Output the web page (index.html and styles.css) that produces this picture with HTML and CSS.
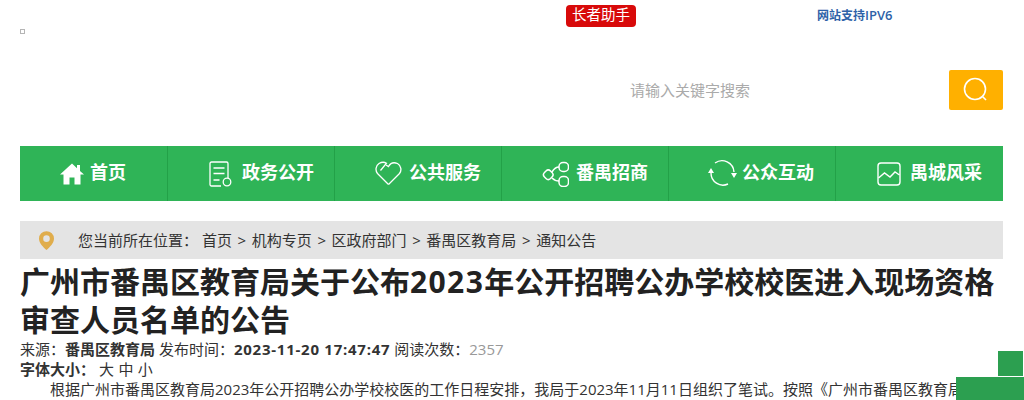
FILE: index.html
```html
<!DOCTYPE html>
<html lang="zh-CN">
<head>
    <meta charset="UTF-8">
    <title>广州市番禺区教育局关于公布2023年公开招聘公办学校校医进入现场资格审查人员名单的公告</title>
    <link rel="stylesheet" href="styles.css">
</head>
<body>
    <header class="top">
        <div class="top_links">
            <a class="elder_btn">长者助手</a>
            <span class="ipv6">网站支持<span class="ipv6_en">IPV6</span></span>
        </div>
        <div class="logo_row">
            <span class="broken_logo"></span>
            <div class="search">
                <span class="search_text">请输入关键字搜索</span>
                <button class="search_btn">
                    <svg width="26" height="26" viewBox="0 0 26 26" fill="none" stroke="#fff" stroke-width="1.6"><circle cx="12" cy="12" r="10.5"/><path d="M19.500 19.500l3.500 3.500"/></svg>
                </button>
            </div>
        </div>
    </header>

    <nav class="nav">
        <a class="nav_item">
            <svg class="icon_home" width="24" height="22" viewBox="0 0 24 22" fill="#fff"><path d="M12 0.500L0 11.500h3.500v10h6v-7h5v7h6v-10H24L20 8V2h-3v3.200z"/></svg>
            <span class="nav_text">首页</span>
        </a>
        <a class="nav_item">
            <svg class="icon_doc" width="23" height="26" viewBox="0 0 23 26" fill="none" stroke="#fff" stroke-width="1.300"><path d="M12 25H2.500A1.500 1.500 0 0 1 1 23.500V2.500A1.500 1.500 0 0 1 2.500 1h15A1.500 1.500 0 0 1 19 2.500V17"/><path d="M4.500 7h11M4.500 12.500h11M4.500 19h6"/><circle cx="18" cy="21" r="3.800"/></svg>
            <span class="nav_text">政务公开</span>
        </a>
        <a class="nav_item">
            <svg class="icon_heart" width="27" height="25" viewBox="0 0 27 25" fill="none" stroke="#fff" stroke-width="1.300"><path d="M13.500 23.500L2.500 12.500C0 9.500 .8 4.500 4 2.500 6.500 1 9.500 1 11.500 2.200L5.500 9.500"/><path d="M13.500 23.500L24.500 12.500C27 9.500 26 4.500 22.500 2.500 19 1 15.500 2 13.500 5.500L11 4"/></svg>
            <span class="nav_text">公共服务</span>
        </a>
        <a class="nav_item">
            <svg class="icon_share" width="27" height="26" viewBox="0 0 27 26" fill="none" stroke="#fff" stroke-width="1.500"><rect x="2" y="9.500" width="8.500" height="8.500" rx="3.200" transform="rotate(45 6.250 13.750)"/><rect x="17" y="1.500" width="9.500" height="9" rx="4"/><rect x="17" y="15.500" width="9.500" height="10" rx="4"/><path d="M10 11Q13 6 17 6M10 17Q13 20 17 20"/></svg>
            <span class="nav_text">番禺招商</span>
        </a>
        <a class="nav_item">
            <svg class="icon_cycle" width="30" height="29" viewBox="0 0 30 29" fill="none" stroke="#fff" stroke-width="1.400"><path d="M8 4A12 12 0 0 1 27 13"/><path d="M4 14A12 12 0 0 0 21 25"/><path d="M24 14h6l-3 5zM1 14h6l-3-5z" fill="#fff" stroke="none"/></svg>
            <span class="nav_text">公众互动</span>
        </a>
        <a class="nav_item">
            <svg class="icon_chart" width="24" height="24" viewBox="0 0 24 24" fill="none" stroke="#fff" stroke-width="1.400"><rect x="1" y="1" width="22" height="22" rx="3"/><path d="M1.500 16l6-5 5.500 4 5-5 4.500 3"/></svg>
            <span class="nav_text">禺城风采</span>
        </a>
    </nav>

    <div class="crumb">
        <svg class="crumb_pin" width="15" height="19" viewBox="0 0 16 20"><path fill-rule="evenodd" fill="#e0ad4c" d="M8 0a8 8 0 0 1 8 8c0 4.500-4.500 9-8 12C4.500 17 0 12.500 0 8a8 8 0 0 1 8-8zm0 4.500a3.500 3.500 0 1 0 0 7 3.500 3.500 0 0 0 0-7z"/></svg>
        <span class="crumb_label">您当前所在位置：</span>
        <span class="crumb_path">首页<i class="sep">&gt;</i>机构专页<i class="sep">&gt;</i>区政府部门<i class="sep">&gt;</i>番禺区教育局<i class="sep">&gt;</i>通知公告</span>
    </div>

    <main class="article">
        <h1 class="title">广州市番禺区教育局关于公布<span class="title_num">2023</span>年公开招聘公办学校校医进入现场资格<br>审查人员名单的公告</h1>
        <div class="meta">来源：<b>番禺区教育局</b> 发布时间：<b class="date">2023-11-20 17:47:47</b> 阅读次数：<span class="count">2357</span></div>
        <div class="meta"><b>字体大小：</b><span class="sizes">大 中 小</span></div>
        <p class="body_text">根据广州市番禺区教育局2023年公开招聘公办学校校医的工作日程安排，我局于2023年11月11日组织了笔试。按照《广州市番禺区教育局2023</p>
    </main>

    <div class="float_top"></div>
    <div class="float_bar"></div>
</body>
</html>
```

FILE: styles.css
```css
html {
    overflow: hidden;
}
body {
    margin: 0;
    height: 400px;
    overflow: hidden;
    background: #fff;
    color: #333;
    font-family: "Open Sans", "Noto Sans CJK SC", sans-serif;
    font-size: 15px;
}
.top {
    height: 146px;
    padding: 0 21px 0 20px;
}
.top_links {
    display: flex;
    align-items: center;
    height: 22px;
    padding-top: 5px;
    padding-left: 546px;
}
.elder_btn {
    width: 70px;
    height: 22px;
    line-height: 20px;
    text-align: center;
    font-size: 14.5px;
    color: #fff;
    background: #d80a0a;
    border-radius: 4px;
}
.ipv6 {
    margin-left: 181px;
    padding-bottom: 2px;
    font-size: 12px;
    font-weight: 600;
    color: #2e62a8;
}
.ipv6_en {
    font-size: 13px;
}
.logo_row {
    display: flex;
    justify-content: space-between;
    align-items: flex-start;
}
.broken_logo {
    display: block;
    width: 3px;
    height: 3px;
    margin-top: 2px;
    border: 1px solid #b5b5b5;
}
.search {
    display: flex;
    align-items: center;
    margin-top: 43px;
}
.search_text {
    width: 319px;
    padding-bottom: 2px;
    font-size: 15px;
    color: #aaa;
}
.search_btn {
    display: flex;
    align-items: center;
    justify-content: center;
    width: 54px;
    height: 40px;
    padding: 0;
    border: 0;
    border-radius: 2px;
    background: #ffb000;
}
.nav {
    display: grid;
    grid-template-columns: 148px repeat(5, 167px);
    width: 983px;
    height: 55px;
    margin-left: 20px;
    background: #2fb457;
}
.nav_item {
    display: flex;
    align-items: center;
    padding-left: 40px;
    border-right: 1px solid #23a148;
    font-size: 18px;
    font-weight: 700;
    color: #fff;
}
.nav_item:last-child {
    border-right: 0;
}
.nav_text {
    margin-bottom: 5px;
}
.icon_home {
    margin-right: 6px;
}
.icon_doc {
    margin: 0 10px 0 1px;
}
.icon_heart,
.icon_share {
    margin-right: 7px;
}
.icon_cycle {
    margin: 0 5px 0 -2px;
}
.icon_chart {
    margin: 0 9px 0 1px;
}
.crumb {
    display: flex;
    align-items: center;
    width: 983px;
    height: 38px;
    margin: 20px 0 0 20px;
    background: #e4e4e4;
}
.crumb_pin {
    margin-left: 19px;
}
.crumb_label {
    width: 124px;
    margin-left: 24px;
    padding-bottom: 2px;
}
.crumb_path {
    padding-bottom: 2px;
}
.sep {
    margin: 0 5.6px;
    font-style: normal;
}
.article {
    padding: 4px 20px 0;
}
.title {
    margin: 0;
    font-size: 30px;
    line-height: 38px;
    font-weight: 700;
    color: #222;
}
.title_num {
    letter-spacing: 1.4px;
}
.meta {
    height: 20px;
    line-height: 20px;
}
.date {
    letter-spacing: 0.75px;
}
.count {
    color: #999;
}
.sizes {
    margin-left: 4px;
    word-spacing: 0.5px;
}
.body_text {
    margin: 0;
    line-height: 20px;
    text-indent: 2em;
}
.float_top {
    position: fixed;
    left: 998px;
    top: 351px;
    width: 25px;
    height: 25px;
    background: #2c9f50;
}
.float_bar {
    position: fixed;
    left: 956px;
    top: 377px;
    width: 68px;
    height: 23px;
    background: #2c9f50;
}
```
